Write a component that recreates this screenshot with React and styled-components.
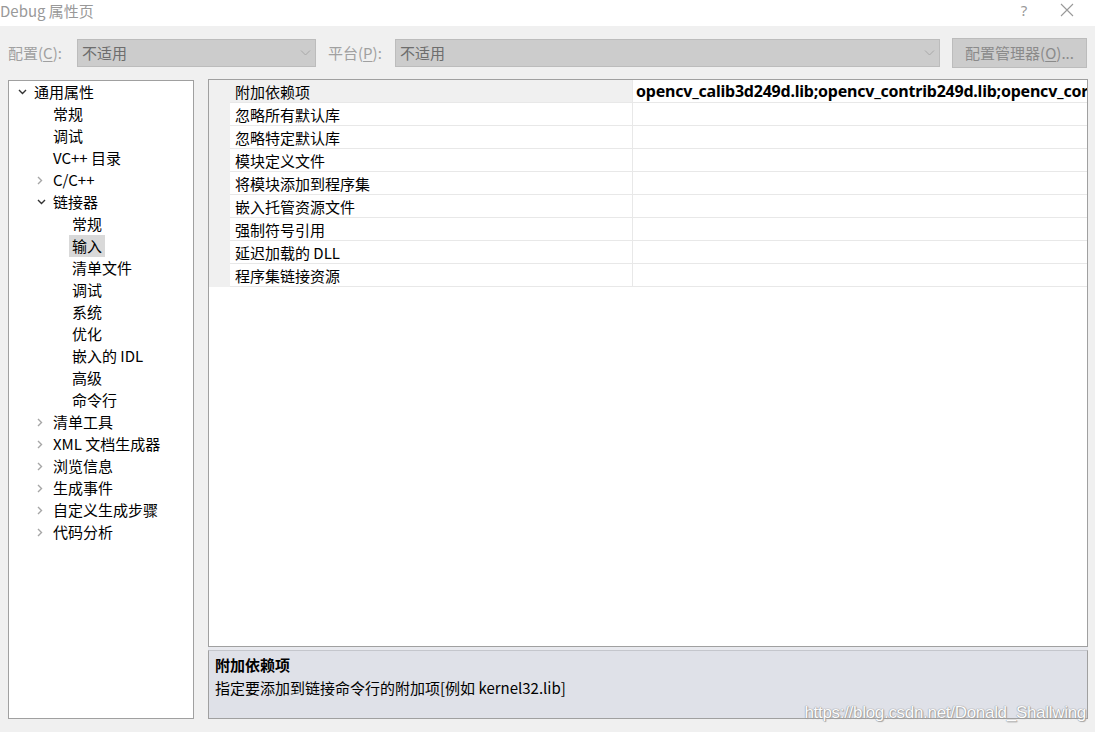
import React from "react";
import styled, { createGlobalStyle } from "styled-components";

const Global = createGlobalStyle`
  html, body { margin: 0; padding: 0; background: #f0f0f0; }
  body { font-family: "Noto Sans CJK SC", "Noto Sans", sans-serif; }
  * { box-sizing: border-box; }
`;

const Window = styled.div`
  width: 1095px;
  height: 732px;
  display: flex;
  flex-direction: column;
  background: #f0f0f0;
  position: relative;
  overflow: hidden;
  font-size: 15px;
  color: #000;
`;

const TitleBar = styled.div`
  height: 26px;
  background: #fff;
  display: flex;
  align-items: center;
`;

const Title = styled.div`
  flex: 1;
  color: #999;
  font-size: 15px;
  line-height: 20px;
  margin-top: -4px;
`;

const TitleBtn = styled.div`
  width: ${(p) => p.w}px;
  height: 26px;
  display: flex;
  align-items: center;
  justify-content: center;
  color: #999;
  font-family: "Noto Sans", sans-serif;
  font-size: 15px;
  margin-top: -6px;
`;

const Toolbar = styled.div`
  height: 53px;
  display: flex;
  align-items: center;
  padding: 0 8px;
`;

const Label = styled.div`
  color: #a0a0a0;
  width: ${(p) => p.w}px;
  flex-shrink: 0;
  font-size: 15px;
  white-space: nowrap;
`;

const U = styled.span`
  text-decoration: underline;
  text-underline-offset: 2px;
`;

const Combo = styled.div`
  width: ${(p) => p.w}px;
  flex-shrink: 0;
  height: 28px;
  background: #cccccc;
  border: 1px solid #bcbcbc;
  display: flex;
  align-items: center;
  padding-left: 4px;
  color: #6d6d6d;
  margin-right: ${(p) => p.mr || 0}px;
`;

const ComboText = styled.div`
  flex: 1;
`;

const ComboArrow = styled.div`
  width: 20px;
  display: flex;
  align-items: center;
  justify-content: center;
`;

const Button = styled.div`
  width: 135px;
  flex-shrink: 0;
  height: 30px;
  background: #cccccc;
  border: 1px solid #bcbcbc;
  color: #8a8a8a;
  display: flex;
  align-items: center;
  justify-content: center;
  margin-left: auto;
`;

const Main = styled.div`
  flex: 1;
  display: flex;
  padding: 0 7px 13px 8px;
  gap: 14px;
  min-height: 0;
`;

const TreePanel = styled.div`
  width: 186px;
  flex-shrink: 0;
  margin-top: 1px;
  background: #fff;
  border: 1px solid #a0a0a0;
`;

const TreeRow = styled.div`
  height: 22px;
  display: flex;
  align-items: center;
  padding-left: ${(p) => 6 + p.level * 19}px;
  white-space: nowrap;
`;

const Twisty = styled.div`
  width: 19px;
  height: 22px;
  display: flex;
  align-items: center;
  justify-content: flex-start;
  padding-left: 3px;
`;

const TreeText = styled.div`
  line-height: 22px;
  padding: 0 3px;
  margin-left: -3px;
  background: ${(p) => (p.sel ? "#d9d9d9" : "transparent")};
`;

const RightCol = styled.div`
  flex: 1;
  min-width: 0;
  display: flex;
  flex-direction: column;
`;

const GridBox = styled.div`
  flex: 1;
  background: #fff;
  border: 1px solid #a0a0a0;
  overflow: hidden;
`;

const Row = styled.div`
  height: 23px;
  display: flex;
`;

const Gutter = styled.div`
  width: 21px;
  flex-shrink: 0;
  background: #f0f0f0;
`;

const NameCell = styled.div`
  width: 403px;
  flex-shrink: 0;
  padding-left: 5px;
  display: flex;
  align-items: center;
  background: ${(p) => (p.sel ? "#f0f0f0" : "#fff")};
  border-bottom: 1px solid #e8e8e8;
  border-right: 1px solid #e8e8e8;
  white-space: nowrap;
`;

const ValueCell = styled.div`
  flex: 1;
  min-width: 0;
  padding-left: 3px;
  display: flex;
  align-items: center;
  border-bottom: 1px solid #e8e8e8;
  font-weight: 700;
  font-family: "Noto Sans", sans-serif;
  font-size: 16px;
  letter-spacing: -0.22px;
  white-space: nowrap;
  overflow: hidden;
`;

const Splitter = styled.div`
  height: 3px;
  background: #e8e9ee;
`;

const DescBox = styled.div`
  height: 69px;
  background: #dfe1e8;
  border: 1px solid #a0a0a0;
  border-top: 1px solid #c4c6cc;
  padding: 3px 6px;
`;

const DescTitle = styled.div`
  font-weight: 700;
  line-height: 22px;
`;

const DescText = styled.div`
  line-height: 24px;
`;

const Watermark = styled.div`
  position: absolute;
  right: 9px;
  bottom: 9px;
  font-family: "Liberation Sans", Arial, sans-serif;
  font-size: 17px;
  color: #fff;
  letter-spacing: -0.3px;
  text-shadow: 0 0 1px #8a8a8a, 0 0 1px #8a8a8a, 1px 1px 1px #a0a0a0;
  opacity: 0.9;
`;

const ChevronDown = () => (
  <svg width="9" height="6" viewBox="0 0 9 6">
    <path d="M1 1 L4.5 4.5 L8 1" fill="none" stroke="#333" strokeWidth="1.4" />
  </svg>
);

const ChevronRight = () => (
  <svg width="6" height="9" viewBox="0 0 6 9">
    <path d="M1 1 L4.5 4.5 L1 8" fill="none" stroke="#a6a6a6" strokeWidth="1.4" />
  </svg>
);

const ComboChevron = () => (
  <svg width="11" height="6" viewBox="0 0 11 6">
    <path d="M1 0.5 L5.5 5 L10 0.5" fill="none" stroke="#a8a8a8" strokeWidth="1" />
  </svg>
);

const tree = [
  { t: "通用属性", l: 0, tw: "down" },
  { t: "常规", l: 1 },
  { t: "调试", l: 1 },
  { t: "VC++ 目录", l: 1 },
  { t: "C/C++", l: 1, tw: "right" },
  { t: "链接器", l: 1, tw: "down" },
  { t: "常规", l: 2 },
  { t: "输入", l: 2, sel: true },
  { t: "清单文件", l: 2 },
  { t: "调试", l: 2 },
  { t: "系统", l: 2 },
  { t: "优化", l: 2 },
  { t: "嵌入的 IDL", l: 2 },
  { t: "高级", l: 2 },
  { t: "命令行", l: 2 },
  { t: "清单工具", l: 1, tw: "right" },
  { t: "XML 文档生成器", l: 1, tw: "right" },
  { t: "浏览信息", l: 1, tw: "right" },
  { t: "生成事件", l: 1, tw: "right" },
  { t: "自定义生成步骤", l: 1, tw: "right" },
  { t: "代码分析", l: 1, tw: "right" },
];

const props = [
  { n: "附加依赖项", v: "opencv_calib3d249d.lib;opencv_contrib249d.lib;opencv_core249d.lib;opencv_features2d249d.lib", sel: true },
  { n: "忽略所有默认库" },
  { n: "忽略特定默认库" },
  { n: "模块定义文件" },
  { n: "将模块添加到程序集" },
  { n: "嵌入托管资源文件" },
  { n: "强制符号引用" },
  { n: "延迟加载的 DLL" },
  { n: "程序集链接资源" },
];

export default function App() {
  return (
    <Window>
      <Global />
      <TitleBar>
        <Title>Debug 属性页</Title>
        <TitleBtn w={30}>?</TitleBtn>
        <TitleBtn w={56}>
          <svg width="14" height="14" viewBox="0 0 14 14">
            <path d="M1 1 L13 13 M13 1 L1 13" stroke="#999" strokeWidth="1.1" />
          </svg>
        </TitleBtn>
      </TitleBar>
      <Toolbar>
        <Label w={69}>
          配置(<U>C</U>):
        </Label>
        <Combo w={239} mr={12}>
          <ComboText>不适用</ComboText>
          <ComboArrow>
            <ComboChevron />
          </ComboArrow>
        </Combo>
        <Label w={67}>
          平台(<U>P</U>):
        </Label>
        <Combo w={545}>
          <ComboText>不适用</ComboText>
          <ComboArrow>
            <ComboChevron />
          </ComboArrow>
        </Combo>
        <Button>
          配置管理器(<U>O</U>)...
        </Button>
      </Toolbar>
      <Main>
        <TreePanel>
          {tree.map((it, i) => (
            <TreeRow key={i} level={it.l}>
              <Twisty>
                {it.tw === "down" && <ChevronDown />}
                {it.tw === "right" && <ChevronRight />}
              </Twisty>
              <TreeText sel={it.sel}>{it.t}</TreeText>
            </TreeRow>
          ))}
        </TreePanel>
        <RightCol>
          <GridBox>
            {props.map((p, i) => (
              <Row key={i}>
                <Gutter />
                <NameCell sel={p.sel}>{p.n}</NameCell>
                <ValueCell>{p.v || ""}</ValueCell>
              </Row>
            ))}
          </GridBox>
          <Splitter />
          <DescBox>
            <DescTitle>附加依赖项</DescTitle>
            <DescText>指定要添加到链接命令行的附加项[例如 kernel32.lib]</DescText>
          </DescBox>
        </RightCol>
      </Main>
      <Watermark>https://blog.csdn.net/Donald_Shallwing</Watermark>
    </Window>
  );
}
